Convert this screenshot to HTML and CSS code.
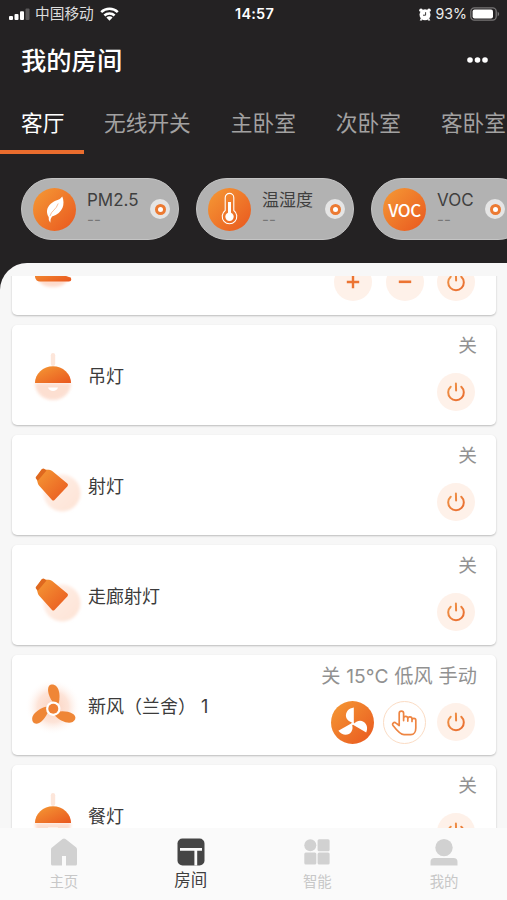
FILE: index.html
```
<!DOCTYPE html>
<html lang="zh-CN">
<head>
<meta charset="utf-8">
<title>我的房间</title>
<link rel="stylesheet" href="styles.css">
</head>
<body>
<svg class="defs" width="0" height="0" aria-hidden="true">
  <defs>
    <linearGradient id="og" x1="0" y1="0" x2="1" y2="1"><stop offset="0" stop-color="#f59a35"/><stop offset="1" stop-color="#e9571f"/></linearGradient>
    <linearGradient id="line" gradientUnits="userSpaceOnUse" x1="10" y1="10" x2="28" y2="29"><stop offset="0" stop-color="#f09a4c"/><stop offset="1" stop-color="#e8662b"/></linearGradient>
    <radialGradient id="glow"><stop offset="0" stop-color="#fbcdb8"/><stop offset=".55" stop-color="#fde1d4"/><stop offset="1" stop-color="#fff" stop-opacity="0"/></radialGradient>
    <linearGradient id="spotglow" x1="0" y1="0" x2="1" y2="1"><stop offset="0" stop-color="#fff0e9"/><stop offset="1" stop-color="#fde2d4"/></linearGradient>
    <filter id="soft" x="-30%" y="-30%" width="160%" height="160%"><feGaussianBlur stdDeviation="1.7"/></filter>
  </defs>
  <symbol id="power" viewBox="0 0 38 38"><g fill="none" stroke="url(#line)" stroke-width="2" stroke-linecap="round"><path d="M13.700 13.700a7.800 7.800 0 1 0 10.600 0"/><path d="M18.900 10.500L19.100 17.500"/></g></symbol>
  <symbol id="pendant" viewBox="0 0 60 60">
    <path d="M12 31h36c0 10-8 17-18 17s-18-7-18-17z" fill="#fcdccd" filter="url(#soft)" opacity=".9"/>
    <rect x="27.8" y="1" width="4.4" height="13" rx="2.2" fill="#fde6da"/>
    <path d="M12 31a18 16.700 0 0 1 36 0z" fill="url(#og)"/>
    <path d="M25 35.500h10c-1 4.500-9 4.500-10 0z" fill="#fff"/>
  </symbol>
  <symbol id="spot" viewBox="0 0 60 60">
    <circle cx="39" cy="35" r="18.500" fill="url(#spotglow)" filter="url(#soft)"/>
    <path d="M18.500 11.500L26 11.800Q28 12 29.500 13.200L44.300 25.500Q45.700 26.800 44.500 28.200L31.500 42Q30.300 43.200 29 42L16 27.500Q15 26.300 14.700 24.800L13.500 20Z" fill="url(#og)"/>
    <path d="M13 18.800L18.800 11.200Q20.200 9.700 21.900 11.200L23.500 12.500L15 22.500Q11.800 20.500 13 18.800z" fill="#df681f"/>
  </symbol>
  <symbol id="fan" viewBox="0 0 60 60">
    <circle cx="30" cy="29" r="28" fill="url(#glow)" opacity=".9"/>
    <g fill="#ef8636"><path d="M31 25.500C25 19 22.500 7.500 28.500 6.500C36 6 38 17 35.500 26z"/><path d="M31 25.500C25 19 22.500 7.500 28.500 6.500C36 6 38 17 35.500 26z" transform="rotate(120 30.300 30.700)"/><path d="M31 25.500C25 19 22.500 7.500 28.500 6.500C36 6 38 17 35.500 26z" transform="rotate(240 30.300 30.700)"/></g>
    <circle cx="30.300" cy="30.700" r="7.200" fill="#fff"/><circle cx="30.300" cy="30.700" r="5" fill="#ef8135"/>
  </symbol>
</svg>
<div class="screen">
  <header class="head">
    <div class="status">
      <div class="status-left">
        <svg width="21" height="14" viewBox="0 0 21 14"><g fill="#fff"><rect x="0" y="9" width="4" height="4" rx="1"/><rect x="5.5" y="7" width="4" height="6" rx="1"/><rect x="11" y="4.2" width="4" height="8.8" rx="1"/><rect x="16.5" y="1.5" width="4" height="11.5" rx="1" opacity=".25"/></g></svg>
        <span class="carrier">中国移动</span>
        <svg width="19" height="14" viewBox="0 0 19 14"><g fill="none" stroke="#fff" stroke-width="2.5"><path d="M1.2 5.2a11.8 11.8 0 0 1 16.6 0"/><path d="M4.4 8.5a7.2 7.2 0 0 1 10.2 0"/></g><path d="M6.4 10.6a4.400 4.400 0 0 1 6.2 0L9.5 13.8z" fill="#fff"/></svg>
      </div>
      <span class="clock">14:57</span>
      <div class="status-right">
        <svg width="12" height="13" viewBox="0 0 12 13"><g fill="#fff"><circle cx="6" cy="6.8" r="5.5"/><circle cx="2" cy="2.2" r="1.8"/><circle cx="10" cy="2.2" r="1.8"/><path d="M2.2 9.500l-1.500 3h2.500zM9.800 9.500l1.500 3h-2.500z"/></g><path d="M6.600 4.200v3H4" fill="none" stroke="#242223" stroke-width=".9"/></svg>
        <span class="pct">93%</span>
        <svg width="30" height="14" viewBox="0 0 30 14"><rect x=".8" y=".8" width="25.400" height="12.400" rx="3.600" fill="none" stroke="#777576" stroke-width="1.300"/><rect x="2.600" y="2.600" width="20.400" height="8.800" rx="2" fill="#fff"/><path d="M27.600 4.600q3.200 2.400 0 4.800z" fill="#777576"/></svg>
      </div>
    </div>
    <div class="title-row">
      <h1>我的房间</h1>
      <svg width="21" height="6" viewBox="0 0 21 6" fill="#fff"><circle cx="3" cy="3" r="2.8"/><circle cx="10.5" cy="3" r="2.8"/><circle cx="18" cy="3" r="2.8"/></svg>
    </div>
    <nav class="rooms">
      <span class="room active">客厅</span><span class="room">无线开关</span><span class="room">主卧室</span><span class="room">次卧室</span><span class="room">客卧室</span>
    </nav>
    <div class="chips">
      <div class="chip">
        <svg width="43" height="43" viewBox="0 0 43 43"><circle cx="21.5" cy="21.5" r="21.5" fill="url(#og)"/><path d="M29.300 8.500C32.200 16 30.300 25 19 28.500Q16.800 31 17.300 34.800Q15.200 32.500 15.700 29C10.500 20 19 13.500 24 12.200Q27.500 11.200 29.300 8.500z" fill="#fff"/><path d="M17 28C18 23 23.500 21.500 25.200 15.500" fill="none" stroke="#f3a26c" stroke-width=".7"/></svg>
        <div class="chip-text"><span class="latin">PM2.5</span><small>--</small></div>
        <i class="dot"><b></b></i>
      </div>
      <div class="chip">
        <svg width="43" height="43" viewBox="0 0 43 43"><circle cx="21.500" cy="21.500" r="21.500" fill="url(#og)"/><path d="M17.200 22.500V9.700a4.300 4.300 0 0 1 8.600 0v12.800a7.300 7.300 0 1 1-8.600 0z" fill="none" stroke="#fff" stroke-width="1.100"/><circle cx="21.500" cy="28.800" r="4.200" fill="#fff"/><path d="M21.500 14v13" stroke="#fff" stroke-width="3"/></svg>
        <div class="chip-text"><span>温湿度</span><small>--</small></div>
        <i class="dot"><b></b></i>
      </div>
      <div class="chip last">
        <div class="voc">VOC</div>
        <div class="chip-text"><span class="latin">VOC</span><small>--</small></div>
        <i class="dot"><b></b></i>
      </div>
    </div>
  </header>
  <main class="panel">
    <div class="list">
      <section class="card">
        <svg class="dev" width="60" height="60" viewBox="0 0 60 60"><path d="M14 40h32q-4 9-16 9t-16-9z" fill="#fddccd" filter="url(#soft)"/><path d="M12 28.500v10.500q1 4.500 5 4.500h29q2.300 0 2.300-2.300t-2.300-2.300z" fill="url(#og)"/></svg>
        <span class="name"></span>
        <div class="side"><span class="state"></span><div class="acts">
          <i class="btn"><svg width="38" height="38" viewBox="0 0 38 38"><path d="M19 12.800v12.400M12.800 19h12.400" stroke="#ec7432" stroke-width="2.400"/></svg></i>
          <i class="btn"><svg width="38" height="38" viewBox="0 0 38 38"><path d="M12.800 18.800h12.400" stroke="#ec7432" stroke-width="2.600"/></svg></i>
          <i class="btn"><svg width="38" height="38"><use href="#power"/></svg></i></div></div>
      </section>
      <section class="card">
        <svg class="dev pend" width="60" height="60"><use href="#pendant"/></svg><span class="name">吊灯</span>
        <div class="side"><span class="state">关</span><div class="acts"><i class="btn"><svg width="38" height="38"><use href="#power"/></svg></i></div></div>
      </section>
      <section class="card">
        <svg class="dev" width="60" height="60"><use href="#spot"/></svg><span class="name">射灯</span>
        <div class="side"><span class="state">关</span><div class="acts"><i class="btn"><svg width="38" height="38"><use href="#power"/></svg></i></div></div>
      </section>
      <section class="card">
        <svg class="dev" width="60" height="60"><use href="#spot"/></svg><span class="name">走廊射灯</span>
        <div class="side"><span class="state">关</span><div class="acts"><i class="btn"><svg width="38" height="38"><use href="#power"/></svg></i></div></div>
      </section>
      <section class="card">
        <svg class="dev" width="60" height="60"><use href="#fan"/></svg><span class="name">新风（兰舍） 1</span>
        <div class="side"><span class="state wide">关 15°C 低风 手动</span><div class="acts">
          <i class="btn big"><svg width="43" height="43" viewBox="0 0 43 43"><circle cx="21.500" cy="21.500" r="21.500" fill="url(#og)"/><g fill="#fff"><path d="M22.800 21.800C12 20.500 12.500 8 22.800 6.500z"/><path d="M22.800 21.800C12 20.500 12.500 8 22.800 6.500z" transform="rotate(120 21.800 22.600)"/><path d="M22.800 21.800C12 20.500 12.500 8 22.800 6.500z" transform="rotate(240 21.800 22.600)"/><circle cx="21.800" cy="22.600" r="1.500"/></g></svg></i>
          <i class="btn big ring"><svg width="41" height="41" viewBox="0 0 41 41"><path d="M15.200 23.500V11.300a2.200 2.200 0 0 1 4.400 0v7.300V16.400a2.100 2.100 0 0 1 4.200 0v2.700V17a2.100 2.100 0 0 1 4.200 0v2.500v-1.300a1.900 1.900 0 0 1 3.800 0V26c0 4-2 6.700-5 6.700H20C16 32.700 12.500 28 9.200 23.700c-1.800-2 .8-4.200 2.800-2.600z" fill="none" stroke="#ee8542" stroke-width="1.700" stroke-linejoin="round"/></svg></i>
          <i class="btn"><svg width="38" height="38"><use href="#power"/></svg></i></div></div>
      </section>
      <section class="card">
        <svg class="dev pend" width="60" height="60"><use href="#pendant"/></svg><span class="name">餐灯</span>
        <div class="side"><span class="state">关</span><div class="acts"><i class="btn"><svg width="38" height="38"><use href="#power"/></svg></i></div></div>
      </section>
    </div>
  </main>
  <footer class="tabs">
    <div class="tab"><svg width="28" height="28" viewBox="0 0 28 28"><path d="M2 9.500Q1 10 1 11.500V26q0 1.500 1.500 1.500H12V18h4v9.500h9.500Q27 27.500 27 26V11.500Q27 10 26 9.300L15.500 1Q14 0 12.500 1z" fill="#d1d1d1"/></svg><span>主页</span></div>
    <div class="tab on"><svg width="28" height="28" viewBox="0 0 28 28"><rect x=".5" y=".5" width="27" height="27" rx="5" fill="#454545"/><path d="M3 11.300h22M18.800 11.300V27.500" fill="none" stroke="#fafafa" stroke-width="2.800"/></svg><span>房间</span></div>
    <div class="tab"><svg width="28" height="28" viewBox="0 0 28 28" fill="#d1d1d1"><circle cx="7.300" cy="7.300" r="6"/><rect x="14.600" y="1.300" width="12" height="12" rx="1.500"/><rect x="1.300" y="14.500" width="12" height="12" rx="1.500"/><rect x="14.600" y="14.500" width="12" height="12" rx="1.500"/></svg><span>智能</span></div>
    <div class="tab"><svg width="28" height="28" viewBox="0 0 28 28" fill="#d1d1d1"><circle cx="14" cy="9.600" r="8.700"/><path d="M.5 27.500v-3.500Q.500 20 4.500 20h19q4 0 4 4v3.500z"/></svg><span>我的</span></div>
  </footer>
</div>
</body>
</html>
```
FILE: styles.css
```
* { box-sizing: border-box; }
body {
  margin: 0;
  background: #242223;
  font-family: Inter, "Noto Sans CJK SC", sans-serif;
}
svg { display: block; flex: none; }
.defs { position: absolute; }
i, b { font-style: normal; display: block; }
.screen {
  width: 507px;
  height: 900px;
  overflow: hidden;
  display: flex;
  flex-direction: column;
  background: #242223;
}
.head { height: 263px; flex: none; color: #fff; }
.status {
  height: 28px;
  padding: 0 7px 0 9px;
  display: grid;
  grid-template-columns: 1fr auto 1fr;
  align-items: center;
  line-height: 28px;
}
.status-left, .status-right { display: flex; align-items: center; }
.status-right { justify-content: flex-end; gap: 5px; }
.carrier { font-size: 14.700px; margin: 0 6px 0 5px; color: #ddd; }
.clock { font-size: 14.500px; font-weight: 600; letter-spacing: .2px; }
.pct { font-size: 14.200px; color: #eee; margin-right: -2px; }
.title-row {
  height: 64px;
  padding: 0 19px 0 21px;
  display: flex;
  align-items: center;
  justify-content: space-between;
}
h1 { margin: 0; font-size: 25.300px; font-weight: 500; line-height: 40px; padding-top: 1px; }
.rooms { height: 62px; display: flex; }
.room {
  flex: none;
  padding: 0 20px;
  font-size: 21.700px;
  line-height: 62px;
  color: #a2a1a1;
  white-space: nowrap;
}
.room.active {
  width: 84px;
  padding: 0 0 0 21px;
  color: #fff;
  border-bottom: 4px solid #ea6d2e;
}
.chips { display: flex; gap: 17px; padding: 24px 0 0 21px; }
.chip {
  flex: none;
  width: 158px;
  height: 62px;
  border-radius: 31px;
  border: 1px solid #c4c4c4;
  background: #b2b2b2;
  display: flex;
  align-items: center;
  padding-left: 11px;
}
.chip-text {
  width: 63px;
  margin-left: 11px;
  color: #3f3f3f;
  font-size: 17px;
  line-height: 26px;
  height: 44px;
}
.chip-text span { display: block; white-space: nowrap; }
.chip-text small { display: block; font-size: 15px; line-height: 13px; color: #777; letter-spacing: 0; }
.chip-text .latin { letter-spacing: 0; line-height: 26px; }
.dot {
  width: 20px;
  height: 20px;
  border-radius: 50%;
  background: #e5e5e5;
  display: grid;
  place-items: center;
}
.dot b { width: 11px; height: 11px; border: 3px solid #ec7a32; border-radius: 50%; background: #fff; }
.last .dot { margin-left: -15px; }
.voc {
  width: 43px;
  height: 43px;
  border-radius: 50%;
  background: linear-gradient(135deg, #f59a35, #e9571f);
  color: #fff;
  font: 500 17px/43px "Noto Sans CJK SC", sans-serif;
  letter-spacing: -.4px;
  text-align: center;
}
.last .chip-text { flex: none; }
.panel {
  flex: 1;
  min-height: 0;
  padding: 13px 11px 0 12px;
  background: #f7f7f7;
  border-top-left-radius: 27px;
}
.list { height: 552px; overflow: hidden; margin: 0 -4px; padding: 0 4px; }
.card {
  height: 100px;
  margin-bottom: 10px;
  border-radius: 5px;
  background: #fff;
  box-shadow: 0 1px 2px rgba(0, 0, 0, .24);
  display: flex;
  padding-left: 11px;
}
.card:first-child { margin-top: -61px; }
.dev { margin-top: 23px; overflow: visible; }
.dev.pend { margin-top: 27px; }
.name {
  margin-left: 5px;
  font-size: 18px;
  line-height: 104px;
  color: #3b3b3b;
  white-space: nowrap;
}
.side { margin-left: auto; }
.state {
  display: block;
  height: 39px;
  padding-right: 19px;
  text-align: right;
  font-size: 18.700px;
  line-height: 42px;
  color: #919191;
}
.state.wide { font-size: 19.200px; word-spacing: .5px; }
.acts {
  height: 56px;
  display: flex;
  align-items: center;
  justify-content: flex-end;
  gap: 13.500px;
  padding-right: 21px;
}
.btn { width: 38px; height: 38px; border-radius: 50%; background: #fef1e9; }
.btn.big { width: 43px; height: 43px; background: none; margin-right: -5px; }
.btn.ring { border: 1px solid #fbdcc4; margin-right: -2px; }
.tabs {
  height: 72px;
  flex: none;
  display: grid;
  grid-template-columns: repeat(4, 1fr);
  background: #fafafa;
}
.tab {
  display: flex;
  flex-direction: column;
  align-items: center;
  padding: 10px 0 0 1px;
  color: #c7c7c7;
  font-size: 14.400px;
}
.tab span { line-height: 22px; margin-top: 5px; }
.tab.on { color: #3f3f3f; font-size: 16.500px; }
.tab.on span { margin-top: 3px; }
```
